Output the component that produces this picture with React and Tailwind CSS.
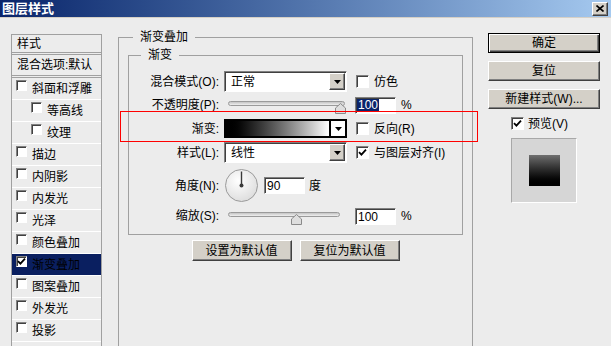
import React from "react";

const sunken =
  "border border-t-[#808080] border-l-[#808080] border-r-white border-b-white shadow-[inset_1px_1px_0_#404040]";
const raised =
  "bg-[#d4d0c8] border border-t-white border-l-white border-r-[#404040] border-b-[#404040] shadow-[inset_-1px_-1px_0_#808080]";

const Tri = () => (
  <svg width="7" height="4" viewBox="0 0 7 4">
    <path d="M0 0H7L3.5 4Z" fill="#000" />
  </svg>
);

const Check = ({ checked, small }) => (
  <span
    className={`${small ? "w-[11px] h-[11px]" : "w-[13px] h-[13px]"} shrink-0 bg-white ${sunken} flex items-center justify-center`}
  >
    {checked && (
      <svg width="9" height="9" viewBox="0 0 9 9">
        <path d="M1 4.2L3.4 6.6L8 1.6" fill="none" stroke="#000" strokeWidth="1.8" />
      </svg>
    )}
  </span>
);

const Select = ({ value }) => (
  <div className={`ml-[5px] w-[123px] h-[21px] bg-white ${sunken} flex`}>
    <span className="flex-1 pl-[6px] flex items-center">{value}</span>
    <span className={`w-[16px] m-[1px] ${raised} flex items-center justify-center`}>
      <Tri />
    </span>
  </div>
);

const Thumb = ({ pos }) => (
  <svg className={`absolute top-[2px] ${pos}`} width="11" height="11" viewBox="0 0 11 11">
    <path d="M0.5 10.5V5L5.5 0.5L10.5 5V10.5Z" fill="#dedede" stroke="#8a8a8a" />
  </svg>
);

const Slider = ({ width, pos }) => (
  <div className={`relative ${width} h-[13px] mt-[4px]`}>
    <div className="h-[5px] rounded-full border border-[#9a9a9a] bg-gradient-to-b from-[#c4c4c4] to-[#efefef]" />
    <Thumb pos={pos} />
  </div>
);

const NumBox = ({ value, selected, width = "w-[41px]", ml }) => (
  <div className={`${ml} ${width} h-[17px] bg-white ${sunken} flex items-center pl-[1px]`}>
    <span className={selected ? "bg-[#0a246a] text-white px-[1px] leading-[13px]" : "px-[1px]"}>{value}</span>
  </div>
);

const Label = ({ children }) => <span className="w-[90px] text-right shrink-0">{children}</span>;

const Btn = ({ children, cls = "" }) => (
  <div className={`h-[20px] ${raised} flex items-center justify-center ${cls}`}>{children}</div>
);

const items = [
  { label: "斜面和浮雕" },
  { label: "等高线", indent: true },
  { label: "纹理", indent: true },
  { label: "描边" },
  { label: "内阴影" },
  { label: "内发光" },
  { label: "光泽" },
  { label: "颜色叠加" },
  { label: "渐变叠加", checked: true, active: true },
  { label: "图案叠加" },
  { label: "外发光" },
  { label: "投影" },
];

export default function App() {
  return (
    <div className="relative w-[611px] h-[346px] overflow-hidden bg-[#ececec] text-black text-[12px] leading-[16px] font-['Liberation_Sans','Noto_Sans_CJK_SC',sans-serif]">
      {/* title bar */}
      <div className="h-[18px] border-b border-[#d6d0c6] bg-gradient-to-r from-[#0a246a] to-[#a6caf0] flex items-center justify-between pl-[2px] pr-[3px]">
        <span className="text-white font-bold text-[13px] leading-[17px]">图层样式</span>
        <span className={`w-[16px] h-[14px] ${raised} flex items-center justify-center`}>
          <svg width="8" height="7" viewBox="0 0 8 7">
            <path d="M0.5 0.5L7.5 6.5M7.5 0.5L0.5 6.5" stroke="#000" strokeWidth="1.6" />
          </svg>
        </span>
      </div>

      <div className="flex items-start">
        {/* style list */}
        <div className="ml-[11px] mt-[16px] w-[91px] h-[320px] border border-[#a0a0a0]">
          <div className="h-[20px] pl-[5px] flex items-center border-b-[3px] border-double border-[#a0a0a0]">样式</div>
          <div className="h-[23px] pl-[5px] flex items-center border-b-[3px] border-double border-[#a0a0a0]">混合选项:默认</div>
          {items.map((it) => (
            <div
              key={it.label}
              className={`h-[22px] border-b border-white flex items-start pt-[2px] ${it.indent ? "pl-[19px]" : "pl-[4px]"} ${it.active ? "bg-[#0a1f60]" : ""}`}
            >
              <Check small checked={it.checked} />
              <span className="ml-[5px] mt-[1px]">{it.label}</span>
            </div>
          ))}
        </div>

        {/* main group */}
        <fieldset className="ml-[16px] mt-[11px] w-[355px] h-[340px] border border-[#a0a0a0]">
          <legend className="ml-[14px] px-[7px] leading-[16px]">渐变叠加</legend>
          <fieldset className="mx-[9px] mt-[2px] border border-[#a0a0a0] pb-[9px]">
            <legend className="ml-[12px] px-[7px] leading-[16px]">渐变</legend>

            <div className="mt-[8px] flex items-center h-[21px]">
              <Label>混合模式(O):</Label>
              <Select value="正常" />
              <span className="ml-[9px]"><Check /></span>
              <span className="ml-[5px]">仿色</span>
            </div>

            <div className="mt-[5px] flex items-start h-[17px]">
              <span className="w-[90px] text-right shrink-0 leading-[17px]">不透明度(P):</span>
              <span className="ml-[9px]">
                <Slider width="w-[117px]" pos="left-[107px]" />
              </span>
              <NumBox value="100" selected ml="ml-[10px]" />
              <span className="ml-[5px] leading-[17px]">%</span>
            </div>

            <div className="mt-[5px] flex items-center h-[19px]">
              <Label>渐变:</Label>
              <div className="ml-[5px] w-[123px] h-[19px] border-2 border-black flex">
                <div className="flex-1 bg-gradient-to-r from-black to-white" />
                <div className="w-[16px] bg-white border-l-2 border-black flex items-center justify-center">
                  <Tri />
                </div>
              </div>
              <span className="ml-[9px]"><Check /></span>
              <span className="ml-[5px]">反向(R)</span>
            </div>

            <div className="mt-[4px] flex items-center h-[21px]">
              <Label>样式(L):</Label>
              <Select value="线性" />
              <span className="ml-[9px]"><Check checked /></span>
              <span className="ml-[5px]">与图层对齐(I)</span>
            </div>

            <div className="mt-[6px] flex items-center h-[33px]">
              <Label>角度(N):</Label>
              <svg className="ml-[6px]" width="33" height="33" viewBox="0 0 33 33">
                <defs>
                  <radialGradient id="dial" cx="0.4" cy="0.35" r="0.7">
                    <stop offset="0" stopColor="#ffffff" />
                    <stop offset="1" stopColor="#dcdcdc" />
                  </radialGradient>
                </defs>
                <circle cx="16.5" cy="16.5" r="16" fill="url(#dial)" stroke="#9a9a9a" />
                <line x1="16.5" y1="2.5" x2="16.5" y2="16.5" stroke="#3a3a3a" strokeWidth="1.4" />
                <circle cx="16.5" cy="16.5" r="2" fill="#3a3a3a" />
              </svg>
              <NumBox value="90" ml="ml-[6px]" />
              <span className="ml-[4px]">度</span>
            </div>

            <div className="mt-[6px] flex items-start h-[17px]">
              <span className="w-[90px] text-right shrink-0 leading-[17px]">缩放(S):</span>
              <span className="ml-[9px]">
                <Slider width="w-[112px]" pos="left-[63px]" />
              </span>
              <NumBox value="100" ml="ml-[15px]" />
              <span className="ml-[5px] leading-[17px]">%</span>
            </div>
          </fieldset>

          <div className="mt-[5px] flex justify-center gap-[8px]">
            <Btn cls="w-[100px] h-[21px]">设置为默认值</Btn>
            <Btn cls="w-[100px] h-[21px]">复位为默认值</Btn>
          </div>
        </fieldset>

        {/* right buttons */}
        <div className="ml-[15px] mt-[15px] w-[112px] flex flex-col">
          <div className="h-[20px] bg-[#d4d0c8] border border-black shadow-[inset_1px_1px_0_#fff,inset_-1px_-1px_0_#404040,inset_-2px_-2px_0_#808080] flex items-center justify-center">
            确定
          </div>
          <Btn cls="mt-[8px]">复位</Btn>
          <Btn cls="mt-[8px]">新建样式(W)...</Btn>
          <div className="mt-[8px] ml-[23px] flex items-center h-[13px]">
            <Check checked />
            <span className="ml-[4px]">预览(V)</span>
          </div>
          <div className="mt-[8px] ml-[23px] w-[66px] h-[65px] bg-[#d6d6d6] border border-t-[#a8a8a8] border-l-[#a8a8a8] border-r-white border-b-white flex items-center justify-center">
            <div className="w-[31px] h-[31px] bg-gradient-to-b from-[#707070] to-black" />
          </div>
        </div>
      </div>

      {/* red annotation box */}
      <div className="absolute left-[120px] top-[111px] w-[358px] h-[31px] border border-[#ff0000]" />
    </div>
  );
}
